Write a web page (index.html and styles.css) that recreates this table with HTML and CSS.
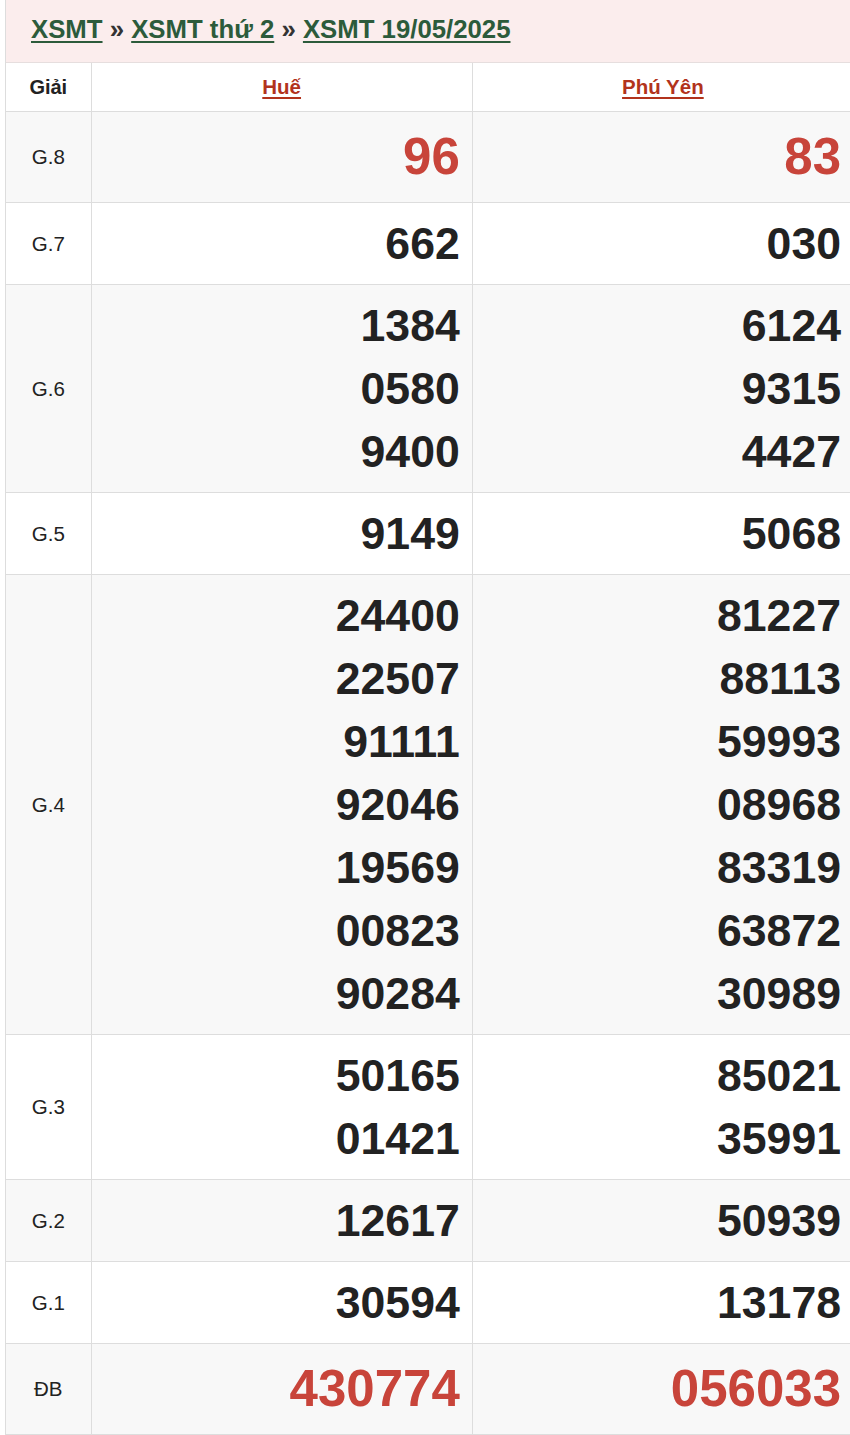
FILE: index.html
```
<!DOCTYPE html>
<html>
<head>
<title>XSMT 19/05/2025</title>
<link rel="stylesheet" href="styles.css">
</head>
<body>

  <div class="box">
    <h2 class="crumbs">
      <a href="#">XSMT</a> &raquo; <a href="#">XSMT thứ 2</a> &raquo; <a href="#">XSMT 19/05/2025</a>
    </h2>

    <table class="result">
      <colgroup>
        <col class="c-prize">
        <col class="c-city">
        <col class="c-city">
      </colgroup>
      <thead>
        <tr>
          <th class="prize">Giải</th>
          <th><a href="#">Huế</a></th>
          <th><a href="#">Phú Yên</a></th>
        </tr>
      </thead>
      <tbody>
        <tr class="odd big">
          <td class="prize">G.8</td>
          <td class="num red"><div>96</div></td>
          <td class="num red"><div>83</div></td>
        </tr>
        <tr>
          <td class="prize">G.7</td>
          <td class="num"><div>662</div></td>
          <td class="num"><div>030</div></td>
        </tr>
        <tr class="odd">
          <td class="prize">G.6</td>
          <td class="num"><div>1384</div><div>0580</div><div>9400</div></td>
          <td class="num"><div>6124</div><div>9315</div><div>4427</div></td>
        </tr>
        <tr>
          <td class="prize">G.5</td>
          <td class="num"><div>9149</div></td>
          <td class="num"><div>5068</div></td>
        </tr>
        <tr class="odd">
          <td class="prize">G.4</td>
          <td class="num"><div>24400</div><div>22507</div><div>91111</div><div>92046</div><div>19569</div><div>00823</div><div>90284</div></td>
          <td class="num"><div>81227</div><div>88113</div><div>59993</div><div>08968</div><div>83319</div><div>63872</div><div>30989</div></td>
        </tr>
        <tr>
          <td class="prize">G.3</td>
          <td class="num"><div>50165</div><div>01421</div></td>
          <td class="num"><div>85021</div><div>35991</div></td>
        </tr>
        <tr class="odd">
          <td class="prize">G.2</td>
          <td class="num"><div>12617</div></td>
          <td class="num"><div>50939</div></td>
        </tr>
        <tr>
          <td class="prize">G.1</td>
          <td class="num"><div>30594</div></td>
          <td class="num"><div>13178</div></td>
        </tr>
        <tr class="odd big">
          <td class="prize">ĐB</td>
          <td class="num red"><div>430774</div></td>
          <td class="num red"><div>056033</div></td>
        </tr>
      </tbody>
    </table>
  </div>

</body>
</html>
```

FILE: styles.css
```
/* Page */
html,
body {
  margin: 0;
  padding: 0;
  background: #fff;
  overflow-x: hidden;
}

body {
  font-family: 'Liberation Sans', Arial, sans-serif;
  color: #222;
}

.box {
  margin-left: 5px;
  width: 848px;
  border-left: 1px solid #ddd;
}

/* Breadcrumb bar */
.crumbs {
  margin: 0;
  height: 62px;
  padding: 0 0 0 25px;
  background: #fbeded;
  border-bottom: 1px solid #e6dede;
  font-size: 25.75px;
  line-height: 58px;
  font-weight: bold;
  color: #333;
}

.crumbs a {
  color: #2c5b3b;
  text-decoration: underline;
  text-underline-offset: 3px;
  text-decoration-thickness: 2px;
}

/* Result table */
.result {
  width: 848px;
  border-collapse: collapse;
  table-layout: fixed;
}

.c-prize {
  width: 85px;
}

.c-city {
  width: 381px;
}

.result th,
.result td {
  border: 1px solid #ddd;
  border-top: 0;
}

.result tr > :first-child {
  border-left: 0;
}

.result th {
  height: 48px;
  padding: 0;
  font-size: 20.5px;
  font-weight: bold;
  text-align: center;
}

.result th a {
  color: #b2331c;
  text-decoration: underline;
  text-underline-offset: 3px;
}

.result th.prize {
  font-size: 20px;
  color: #222;
}

.result tr.odd td {
  background: #f8f8f8;
}

.result td.prize {
  font-size: 20.5px;
  text-align: center;
  padding: 0;
}

.result td.num {
  padding: 9px 12px 9px 0;
  text-align: right;
  font-size: 44.6px;
  font-weight: bold;
  line-height: 63px;
  color: #222;
}

.result tr.big td.num {
  font-size: 51px;
  line-height: 72px;
}

.result td.red {
  color: #c8443a;
}
```
